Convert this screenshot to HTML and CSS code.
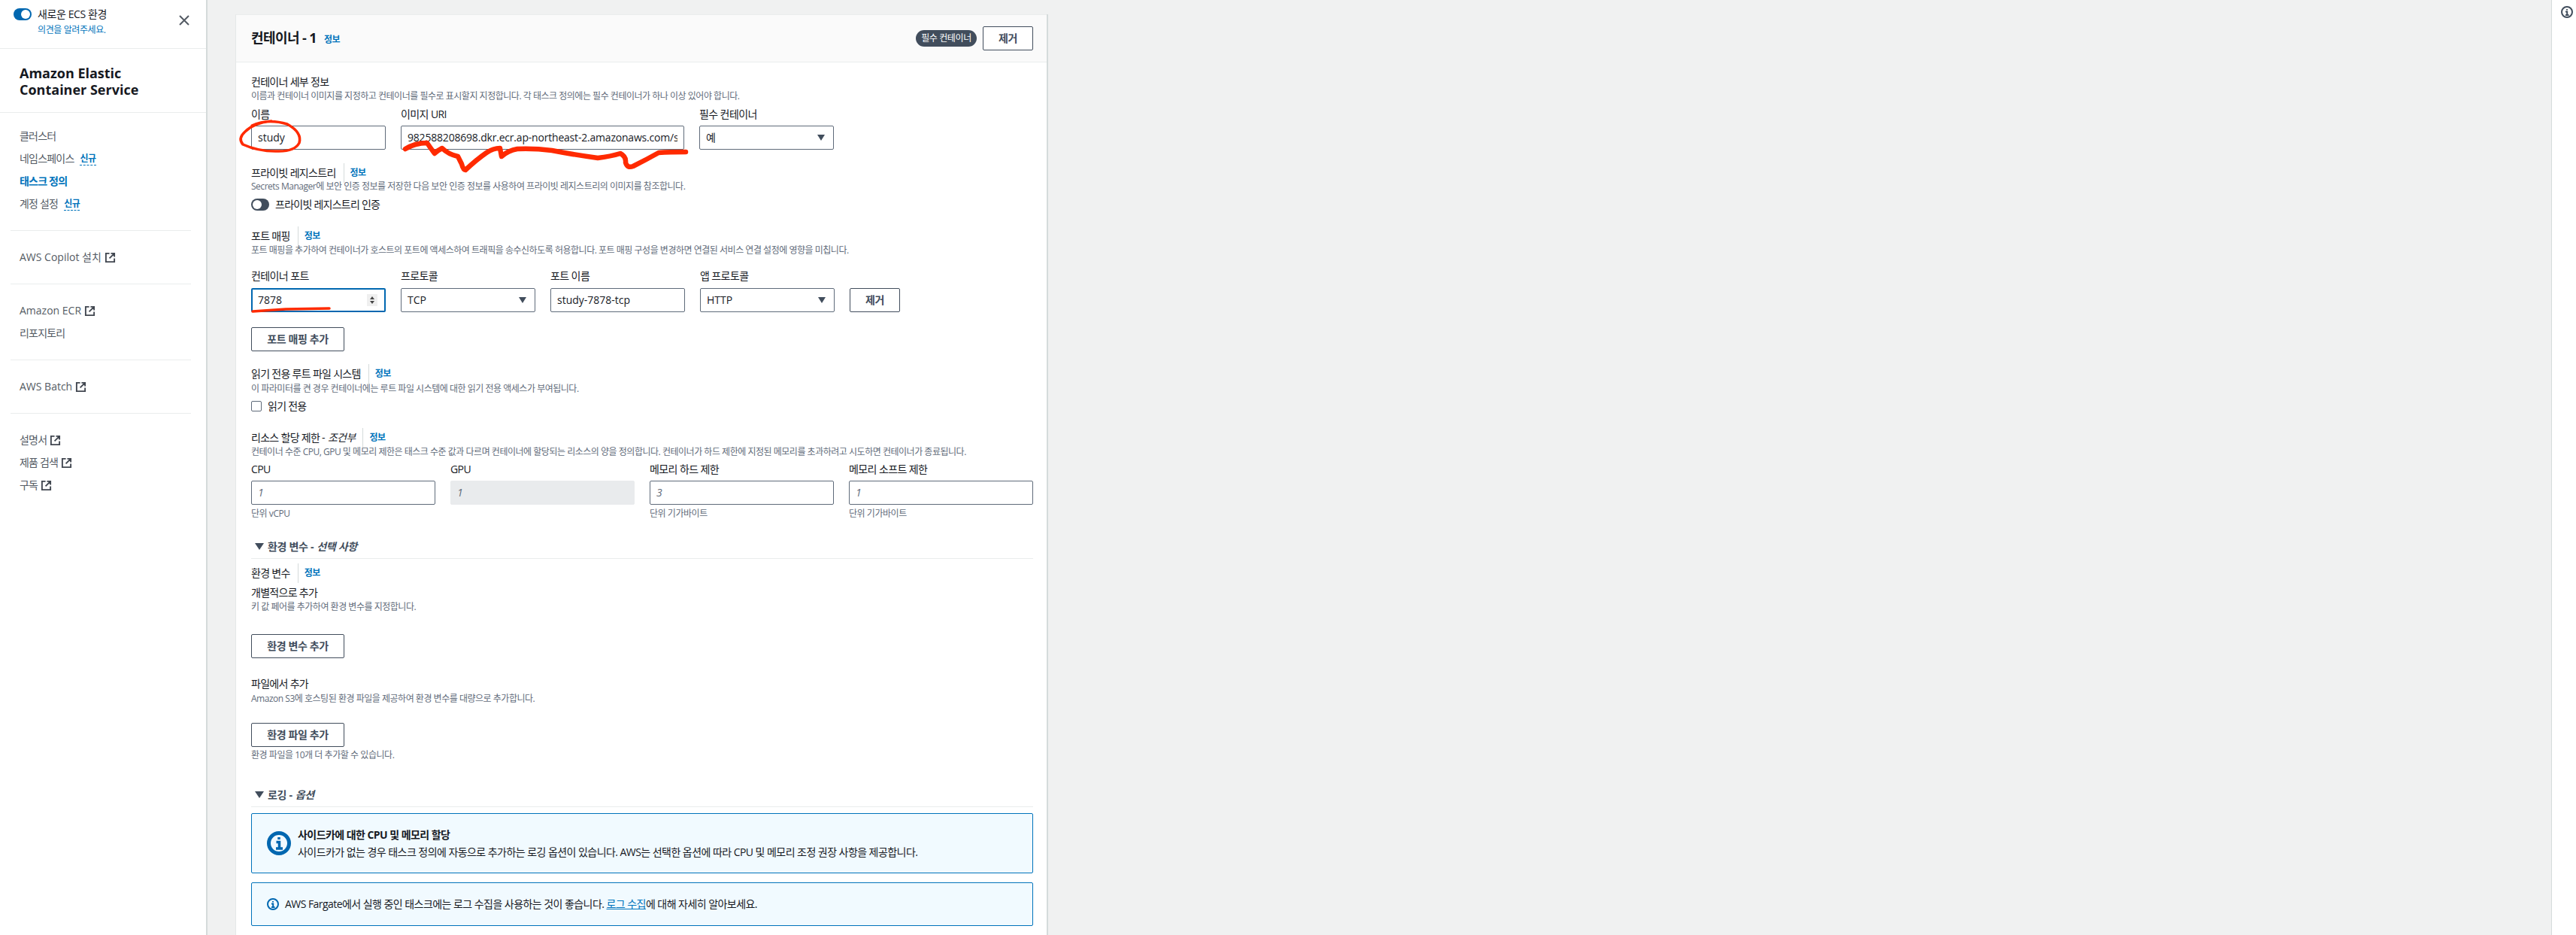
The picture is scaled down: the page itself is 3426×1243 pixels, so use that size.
FILE: index.html
```html
<!DOCTYPE html>
<html lang="ko">
<head>
    <meta charset="UTF-8">
    <title>태스크 정의 - Amazon ECS</title>
    <link rel="stylesheet" href="styles.css">
</head>
<body>
    <aside class="sidebar">
        <div class="side-top">
            <span class="switch"><span class="knob"></span></span>
            <div class="side-top-text">
                <div>새로운 ECS 환경</div>
                <a href="#">의견을 알려주세요.</a>
            </div>
            <svg class="close" width="16" height="16" viewBox="0 0 16 16"><path d="M2 2l12 12M14 2L2 14"/></svg>
        </div>
        <h2 class="side-title">Amazon Elastic Container Service</h2>
        <nav class="side-nav">
            <ul>
                <li class="ko">클러스터</li>
                <li class="ko">네임스페이스 <a class="new" href="#">신규</a></li>
                <li class="ko active">태스크 정의</li>
                <li class="ko">계정 설정 <a class="new" href="#">신규</a></li>
            </ul>
            <ul>
                <li>AWS Copilot 설치 <svg class="ext" viewBox="0 0 16 16"><path d="M7 2H2v12h12V9M9 2h5v5M14 2L7 9"/></svg></li>
            </ul>
            <ul>
                <li>Amazon ECR <svg class="ext" viewBox="0 0 16 16"><path d="M7 2H2v12h12V9M9 2h5v5M14 2L7 9"/></svg></li>
                <li class="ko">리포지토리</li>
            </ul>
            <ul>
                <li>AWS Batch <svg class="ext" viewBox="0 0 16 16"><path d="M7 2H2v12h12V9M9 2h5v5M14 2L7 9"/></svg></li>
            </ul>
            <ul class="last">
                <li class="ko">설명서 <svg class="ext" viewBox="0 0 16 16"><path d="M7 2H2v12h12V9M9 2h5v5M14 2L7 9"/></svg></li>
                <li class="ko">제품 검색 <svg class="ext" viewBox="0 0 16 16"><path d="M7 2H2v12h12V9M9 2h5v5M14 2L7 9"/></svg></li>
                <li class="ko">구독 <svg class="ext" viewBox="0 0 16 16"><path d="M7 2H2v12h12V9M9 2h5v5M14 2L7 9"/></svg></li>
            </ul>
        </nav>
    </aside>

    <main class="content">
        <section class="card">
            <header class="card-head">
                <h1>컨테이너 - 1 <a class="info" href="#">정보</a></h1>
                <span class="badge">필수 컨테이너</span>
                <button class="btn btn-remove">제거</button>
            </header>

            <div class="card-body">
                <div class="head">컨테이너 세부 정보</div>
                <div class="desc">이름과 컨테이너 이미지를 지정하고 컨테이너를 필수로 표시할지 지정합니다. 각 태스크 정의에는 필수 컨테이너가 하나 이상 있어야 합니다.</div>
                <div class="row row-details">
                    <div class="field f-name"><label>이름</label><div class="input">study</div></div>
                    <div class="field f-uri"><label>이미지 URI</label><div class="input"><span class="clip">982588208698.dkr.ecr.ap-northeast-2.amazonaws.com/study</span></div></div>
                    <div class="field f-name"><label>필수 컨테이너</label><div class="input select">예</div></div>
                </div>

                <div class="head sec-registry">프라이빗 레지스트리 <a class="info split" href="#">정보</a></div>
                <div class="desc desc-tight">Secrets Manager에 보안 인증 정보를 저장한 다음 보안 인증 정보를 사용하여 프라이빗 레지스트리의 이미지를 참조합니다.</div>
                <div class="check-row toggle-row"><span class="switch off"><span class="knob"></span></span>프라이빗 레지스트리 인증</div>

                <div class="head sec-port">포트 매핑 <a class="info split" href="#">정보</a></div>
                <div class="desc">포트 매핑을 추가하여 컨테이너가 호스트의 포트에 액세스하여 트래픽을 송수신하도록 허용합니다. 포트 매핑 구성을 변경하면 연결된 서비스 연결 설정에 영향을 미칩니다.</div>
                <div class="row row-port">
                    <div class="field f-name"><label>컨테이너 포트</label>
                        <div class="input focus">7878
                            <span class="spinner"><i class="up"></i><i class="down"></i></span>
                        </div>
                    </div>
                    <div class="field f-name"><label>프로토콜</label><div class="input select">TCP</div></div>
                    <div class="field f-name"><label>포트 이름</label><div class="input">study-7878-tcp</div></div>
                    <div class="field f-name"><label>앱 프로토콜</label><div class="input select">HTTP</div></div>
                    <button class="btn btn-inline">제거</button>
                </div>
                <button class="btn btn-add btn-port">포트 매핑 추가</button>

                <div class="head sec-readonly">읽기 전용 루트 파일 시스템 <a class="info split" href="#">정보</a></div>
                <div class="desc desc-loose">이 파라미터를 켠 경우 컨테이너에는 루트 파일 시스템에 대한 읽기 전용 액세스가 부여됩니다.</div>
                <div class="check-row readonly-row"><span class="checkbox"></span>읽기 전용</div>

                <div class="head sec-limit">리소스 할당 제한 - <em>조건부</em> <a class="info split" href="#">정보</a></div>
                <div class="desc">컨테이너 수준 CPU, GPU 및 메모리 제한은 태스크 수준 값과 다르며 컨테이너에 할당되는 리소스의 양을 정의합니다. 컨테이너가 하드 제한에 지정된 메모리를 초과하려고 시도하면 컨테이너가 종료됩니다.</div>
                <div class="limits">
                    <div class="field"><label>CPU</label><div class="input hint">1</div><div class="help">단위 vCPU</div></div>
                    <div class="field"><label>GPU</label><div class="input hint disabled">1</div></div>
                    <div class="field"><label>메모리 하드 제한</label><div class="input hint">3</div><div class="help">단위 기가바이트</div></div>
                    <div class="field"><label>메모리 소프트 제한</label><div class="input hint">1</div><div class="help">단위 기가바이트</div></div>
                </div>

                <div class="expander env-exp"><span class="caret"></span>환경 변수 - <em>선택 사항</em></div>
                <div class="head sec-env">환경 변수 <a class="info split" href="#">정보</a></div>
                <div class="head sub-one">개별적으로 추가</div>
                <div class="desc">키 값 페어를 추가하여 환경 변수를 지정합니다.</div>
                <button class="btn btn-add btn-env">환경 변수 추가</button>
                <div class="head sub-two">파일에서 추가</div>
                <div class="desc desc-loose">Amazon S3에 호스팅된 환경 파일을 제공하여 환경 변수를 대량으로 추가합니다.</div>
                <button class="btn btn-add btn-file">환경 파일 추가</button>
                <div class="help help-file">환경 파일을 10개 더 추가할 수 있습니다.</div>

                <div class="expander log-exp"><span class="caret"></span>로깅 - <em>옵션</em></div>
                <div class="alert alert-big">
                    <svg class="alert-icon" viewBox="0 0 32 32"><circle cx="16" cy="16" r="13.5"/><path class="glyph" d="M16 8v3M12.5 14.5H16.5V23M12 23h9"/></svg>
                    <div>
                        <div class="alert-title">사이드카에 대한 CPU 및 메모리 할당</div>
                        <div>사이드카가 없는 경우 태스크 정의에 자동으로 추가하는 로깅 옵션이 있습니다. AWS는 선택한 옵션에 따라 CPU 및 메모리 조정 권장 사항을 제공합니다.</div>
                    </div>
                </div>
                <div class="alert alert-small">
                    <svg class="alert-icon-sm" viewBox="0 0 16 16"><circle cx="8" cy="8" r="7"/><path d="M8 4v1.5M6 7.5h2.2V12M6 12h4.500"/></svg>
                    <div>AWS Fargate에서 실행 중인 태스크에는 로그 수집을 사용하는 것이 좋습니다. <a href="#">로그 수집</a>에 대해 자세히 알아보세요.</div>
                </div>
            </div>
        </section>
    </main>

    <aside class="tools">
        <svg width="16" height="16" viewBox="0 0 16 16"><circle cx="8" cy="8" r="7"/><path d="M8 4v1.500M6 7.500h2.200V12M6 12h4.500"/></svg>
    </aside>

    <!-- red pen marks on top of the screenshot -->
    <svg class="scribble" width="3426" height="1243" viewBox="0 0 3426 1243">
        <path d="M335 167Q356 157 382 165Q402 176 398 190Q392 201 371 201Q345 202 323 192Q316 184 326 175Q338 163 361 161"/>
        <path class="thick" d="M539 198Q552 190 568 190Q572 196 578 204Q582 200 588 197Q596 205 609 208L614 218Q616 226 619 226Q634 212 647 203Q656 197 665 197L667 208Q676 200 688 198Q710 197 734 200Q765 206 795 210Q812 208 825 204Q833 208 832 216Q834 224 842 221Q860 212 876 203Q890 202 912 202"/>
        <path d="M336 414L380 411L438 410"/>
    </svg>
</body>
</html>
```

FILE: styles.css
```css
* {
    margin: 0;
    padding: 0;
    box-sizing: border-box;
}

html, body {
    height: 1243px;
    overflow: hidden;
}

body {
    display: flex;
    position: relative;
    background: #f0f1f1;
    color: #16191f;
    font-family: 'Open Sans', 'Noto Sans CJK KR', sans-serif;
    font-size: 14px;
    line-height: 20px;
}

a {
    color: #0073bb;
    text-decoration: none;
}

/* sidebar */
.sidebar {
    width: 276px;
    flex-shrink: 0;
    background: #fff;
    border-right: 2px solid #d5dbdb;
    color: #545b64;
}

.side-top {
    display: flex;
    height: 65px;
    padding: 9px 0 0 18px;
    border-bottom: 1px solid #eaeded;
}

.side-top-text {
    margin-left: 8px;
    width: 187px;
    color: #16191f;
    letter-spacing: -0.4px;
}

.side-top-text a {
    display: block;
    margin-top: 2px;
    font-size: 12px;
    line-height: 18px;
}

.switch {
    display: block;
    width: 24px;
    height: 16px;
    margin-top: 2px;
    border-radius: 8px;
    background: #0067b0;
    position: relative;
    flex-shrink: 0;
}

.knob {
    position: absolute;
    top: 2px;
    right: 2px;
    width: 12px;
    height: 12px;
    border-radius: 50%;
    background: #fff;
}

.switch.off {
    background: #414d5c;
    margin: 0 8px 0 0;
}

.switch.off .knob {
    right: auto;
    left: 2px;
}

.close {
    margin-top: 10px;
    fill: none;
    stroke: #545b64;
    stroke-width: 2;
}

.side-title {
    height: 85px;
    padding: 21px 40px 0 26px;
    border-bottom: 1px solid #eaeded;
    font-size: 18px;
    line-height: 22px;
    font-weight: 700;
    color: #16191f;
}

.side-nav {
    padding: 16px 20px 0 14px;
}

.side-nav ul {
    list-style: none;
    padding: 0 0 20px 12px;
    margin-bottom: 20px;
    border-bottom: 1px solid #eaeded;
}

.side-nav ul.last {
    border-bottom: none;
}

.side-nav li {
    display: flex;
    align-items: center;
    gap: 4px;
    height: 30px;
    white-space: nowrap;
}

.side-nav .ko {
    letter-spacing: -0.8px;
}

.side-nav .active {
    color: #0073bb;
    font-weight: 700;
}

.new {
    margin-left: 4px;
    font-weight: 700;
    font-size: 12px;
    line-height: 17px;
    letter-spacing: -0.4px;
    border-bottom: 1px dashed #0073bb;
}

.ext {
    width: 15px;
    height: 15px;
    fill: none;
    stroke: #414750;
    stroke-width: 2;
}

/* main column */
.content {
    width: 1118px;
    flex-shrink: 0;
    padding: 19px 0 0 37px;
}

.card {
    width: 1081px;
    height: 1224px;
    background: #fff;
    border-right: 2px solid #d5dbdb;
    border-left: 1px solid #e5e8e8;
}

.card-head {
    display: flex;
    align-items: center;
    height: 64px;
    padding: 0 18px 0 20px;
    background: #fafafa;
    border-bottom: 1px solid #eaeded;
    border-top: 1px solid #eaeded;
}

.card-head h1 {
    flex: 1;
    font-size: 18px;
    line-height: 22px;
    font-weight: 700;
    letter-spacing: -0.6px;
}

.info {
    font-size: 12px;
    font-weight: 700;
    margin-left: 6px;
    letter-spacing: -0.5px;
}

.split {
    margin-left: 6px;
    padding-left: 8px;
    border-left: 1px solid #d5dbdb;
    display: inline-block;
    line-height: 26px;
}

.badge {
    width: 81px;
    height: 22px;
    border-radius: 11px;
    background: #414d5c;
    color: #fff;
    font-size: 12px;
    line-height: 21px;
    letter-spacing: -0.4px;
    text-align: center;
    margin-right: 8px;
}

.btn {
    display: block;
    height: 32px;
    background: #fff;
    border: 1px solid #414d5c;
    border-radius: 2px;
    font: 700 14px/20px 'Open Sans', 'Noto Sans CJK KR', sans-serif;
    color: #414d5c;
    letter-spacing: -0.4px;
}

.btn-remove {
    width: 67px;
}

.btn-add {
    width: 124px;
}

.card-body {
    padding: 16px 18px 0 20px;
}

.head {
    height: 20px;
    line-height: 20px;
    letter-spacing: -0.7px;
    white-space: nowrap;
    display: flex;
    align-items: center;
    gap: 4px;
}

.head em {
    font-weight: 400;
}

.desc {
    height: 16px;
    margin-top: 1px;
    font-size: 12px;
    line-height: 16px;
    letter-spacing: -0.48px;
    color: #5f6b7a;
    white-space: nowrap;
}

.desc-tight {
    margin-top: 0;
}

.desc-loose {
    margin-top: 2px;
}

.help {
    height: 16px;
    margin-top: 4px;
    font-size: 12px;
    line-height: 16px;
    letter-spacing: -0.45px;
    color: #5f6b7a;
}

.row {
    display: flex;
    gap: 20px;
}

.row-details {
    margin-top: 6px;
}

.field label {
    display: block;
    height: 20px;
    margin-bottom: 5px;
    line-height: 20px;
    letter-spacing: -0.6px;
}

.f-name {
    width: 179px;
}

.f-uri {
    width: 377px;
}

.input {
    position: relative;
    height: 32px;
    padding: 0 8px;
    white-space: nowrap;
    background: #fff;
    border: 1px solid #5f6b7a;
    border-radius: 2px;
    line-height: 30px;
}

.clip {
    display: block;
    overflow: hidden;
    letter-spacing: -0.2px;
}

.select::after {
    content: '';
    position: absolute;
    top: 11px;
    right: 11px;
    border-left: 5px solid transparent;
    border-right: 5px solid transparent;
    border-top: 8px solid #414d5c;
}

.focus {
    border: 2px solid #0067b0;
    padding: 0 7px;
    line-height: 28px;
}

.spinner {
    position: absolute;
    top: 6px;
    right: 9px;
    width: 14px;
    height: 16px;
    background: #efefef;
}

.spinner i {
    position: absolute;
    left: 4px;
    border-left: 3px solid transparent;
    border-right: 3px solid transparent;
}

.spinner .up {
    top: 3px;
    border-bottom: 4px solid #444;
}

.spinner .down {
    bottom: 3px;
    border-top: 4px solid #444;
}

.hint {
    color: #5f6b7a;
    font-style: italic;
}

.disabled {
    background: #e9ebed;
    border-color: #e9ebed;
}

.check-row {
    display: flex;
    align-items: center;
    height: 20px;
    letter-spacing: -0.75px;
}

.toggle-row {
    margin-top: 6px;
}

.readonly-row {
    margin-top: 5px;
}

.checkbox {
    width: 14px;
    height: 14px;
    margin-right: 8px;
    border: 1px solid #5f6b7a;
    border-radius: 2px;
}

.sec-registry {
    margin-top: 21px;
}

.sec-port {
    margin-top: 22px;
}

.row-port {
    margin-top: 16px;
    align-items: flex-end;
}

.row-port label {
    margin-bottom: 6px;
}

.btn-inline {
    width: 67px;
}

.btn-port {
    margin-top: 20px;
}

.sec-readonly {
    margin-top: 20px;
}

.sec-limit {
    margin-top: 22px;
}

.limits {
    display: grid;
    grid-template-columns: repeat(4, 245px);
    gap: 20px;
    margin-top: 5px;
}

.expander {
    display: flex;
    align-items: center;
    height: 26px;
    padding: 0 0 6px 5px;
    border-bottom: 1px solid #eaeded;
    font-weight: 700;
    color: #414d5c;
    letter-spacing: -0.3px;
}

.expander em {
    margin-left: 4px;
}

.caret {
    width: 0;
    margin-right: 5px;
    border-left: 6px solid transparent;
    border-right: 6px solid transparent;
    border-top: 9px solid #414d5c;
}

.env-exp {
    margin-top: 26px;
}

.sec-env {
    margin-top: 9px;
}

.sub-one {
    margin-top: 6px;
}

.btn-env {
    margin-top: 28px;
}

.sub-two {
    margin-top: 24px;
}

.btn-file {
    margin-top: 24px;
}

.help-file {
    margin-top: 3px;
}

.log-exp {
    margin-top: 35px;
}

/* info boxes */
.alert {
    display: flex;
    align-items: center;
    background: #f1faff;
    border: 1px solid #0073bb;
    border-radius: 2px;
    padding-left: 20px;
    color: #16191f;
    letter-spacing: -0.55px;
}

.alert a {
    text-decoration: underline;
}

.alert-big {
    height: 80px;
    margin-top: 8px;
    gap: 9px;
}

.alert-small {
    height: 58px;
    margin-top: 12px;
    gap: 8px;
}

.alert-title {
    font-weight: 700;
    margin-bottom: 3px;
}

.alert-icon {
    width: 32px;
    height: 32px;
    fill: none;
    stroke: #0067b0;
    stroke-width: 5;
    flex-shrink: 0;
}

.alert-icon .glyph {
    stroke-width: 3.500;
}

.alert-icon-sm {
    width: 16px;
    height: 16px;
    fill: none;
    stroke: #0067b0;
    stroke-width: 2;
    flex-shrink: 0;
}

/* help panel strip */
.tools {
    margin-left: auto;
    width: 33px;
    background: #fff;
    border-left: 1px solid #d5dbdb;
    padding: 8px 0 0 12px;
}

.tools svg {
    fill: none;
    stroke: #414d5c;
    stroke-width: 2;
}

.scribble {
    position: absolute;
    top: 0;
    left: 0;
    pointer-events: none;
    fill: none;
    stroke: #ff2a00;
    stroke-width: 3.5;
    stroke-linecap: round;
    stroke-linejoin: round;
}

.scribble .thick {
    stroke-width: 6.5;
}
```
